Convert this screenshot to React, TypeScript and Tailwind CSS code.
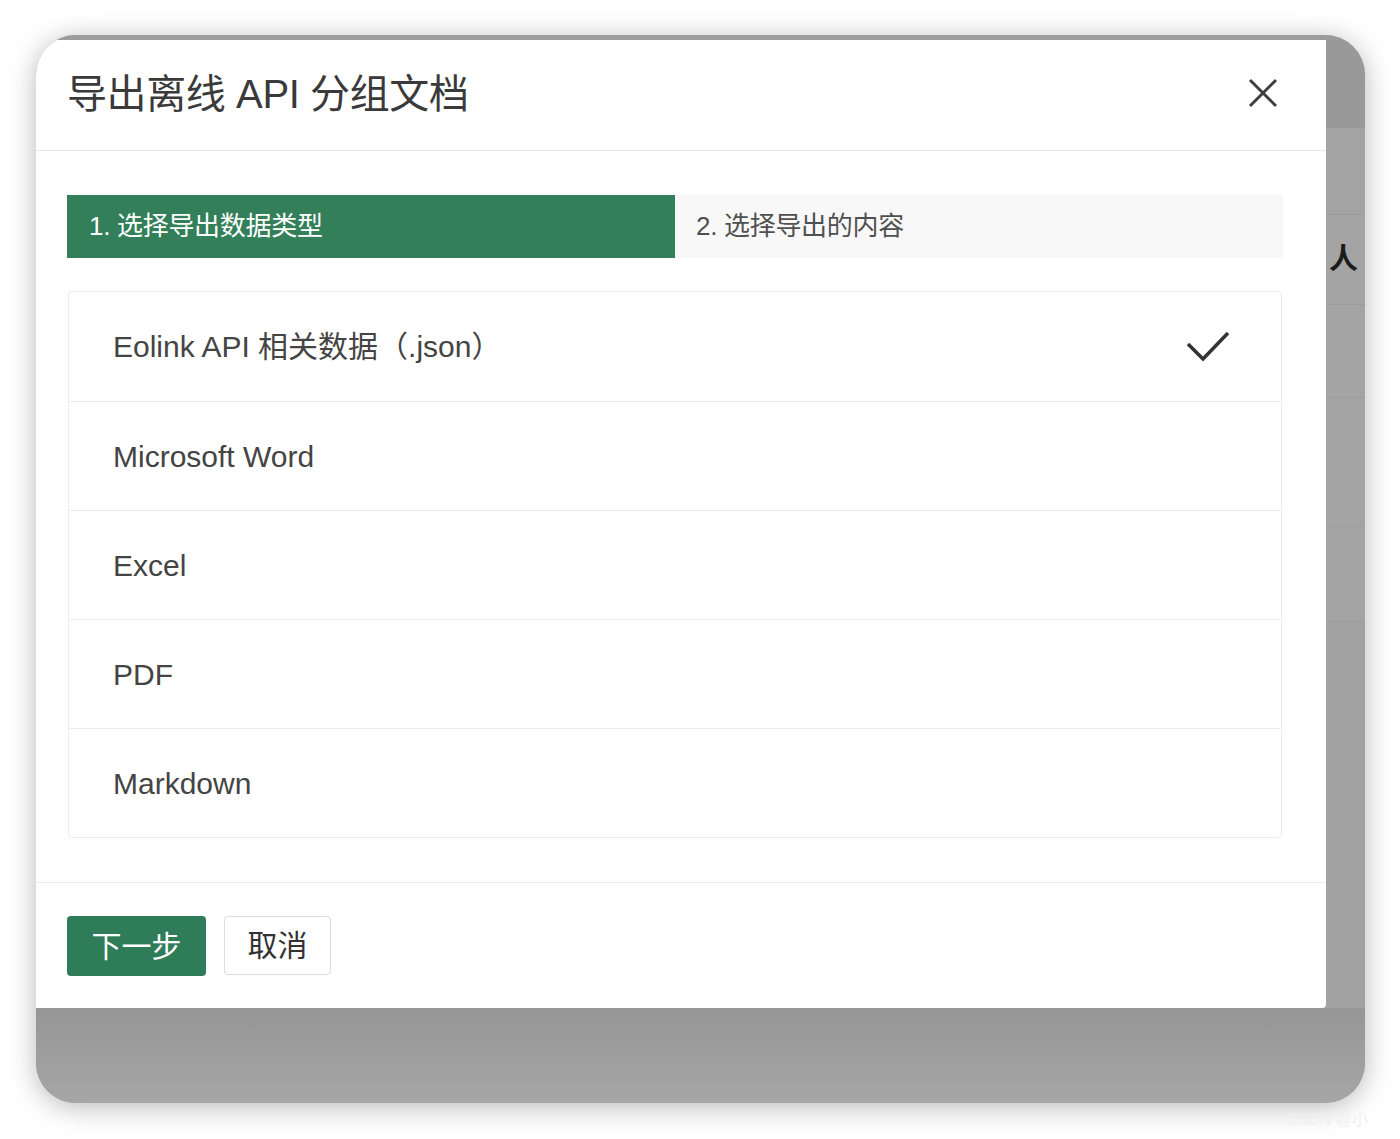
import React from "react";

const items = [
  "Eolink API 相关数据（.json）",
  "Microsoft Word",
  "Excel",
  "PDF",
  "Markdown",
];

export default function App() {
  return (
    <div className="w-[1400px] h-[1139px] bg-white pt-[35px] pl-[36px] font-['Liberation_Sans','Noto_Sans_CJK_SC',sans-serif]">
      <div className="w-[1329px] h-[1068px] rounded-[40px] overflow-hidden bg-[#a0a0a0] shadow-[0_4px_28px_rgba(0,0,0,0.28)] flex flex-col">
        <div className="h-[5px] bg-[#9c9c9c]" />
        <div className="flex">
          {/* Modal */}
          <div className="w-[1290px] h-[968px] bg-white rounded-br-[4px] flex flex-col">
            <div className="h-[111px] border-b border-[#e8e8e8] flex items-center justify-between pl-[31px] pr-[48px]">
              <div className="text-[40px] text-[#3a3a3a] tracking-[-0.4px] pb-[2px]">导出离线 API 分组文档</div>
              <svg width="30" height="30" viewBox="0 0 30 30" className="mb-[4px]">
                <path d="M2 2 L28 28 M28 2 L2 28" stroke="#3f3f3f" strokeWidth="3" fill="none" />
              </svg>
            </div>
            <div className="pt-[44px] pl-[31px] pr-[43px]">
              <div className="flex h-[63px]">
                <div className="w-[608px] bg-[#337f5a] flex items-center pl-[22px] text-[26px] text-white tracking-[-0.3px]">
                  1. 选择导出数据类型
                </div>
                <div className="flex-1 bg-[#f8f8f8] flex items-center pl-[21px] text-[26px] text-[#505050] tracking-[-0.3px]">
                  2. 选择导出的内容
                </div>
              </div>
              <div className="mt-[33px] ml-[1px] w-[1214px] border border-[#ececec] rounded-[4px] flex flex-col">
                {items.map((t, i) => (
                  <div
                    key={t}
                    className={
                      "h-[109px] flex items-center justify-between pl-[44px] pr-[50px] text-[30px] text-[#444] " +
                      (i > 0 ? "border-t border-[#ececec]" : "")
                    }
                  >
                    <span>{t}</span>
                    {i === 0 && (
                      <svg width="46" height="34" viewBox="0 0 46 34">
                        <path d="M3 14 L18 29 L43 3" stroke="#333" strokeWidth="3.5" fill="none" strokeLinejoin="miter" />
                      </svg>
                    )}
                  </div>
                ))}
              </div>
            </div>
            <div className="mt-[44px] border-t border-[#ececec] flex-1 pt-[33px] pl-[31px] flex gap-[18px] items-start">
              <div className="w-[139px] h-[60px] rounded-[4px] bg-[#2f7d58] text-white text-[30px] flex items-center justify-center">
                下一步
              </div>
              <div className="w-[107px] h-[59px] rounded-[4px] border border-[#dcdcdc] bg-white text-[#333] text-[30px] flex items-center justify-center">
                取消
              </div>
            </div>
          </div>
          {/* background strip */}
          <div className="flex-1 flex flex-col overflow-hidden">
            <div className="h-[88px] bg-[#999]" />
            <div className="h-[87px] bg-[#a3a3a3] border-b border-[#9a9a9a]" />
            <div className="h-[90px] bg-[#a4a4a4] border-b border-[#9c9c9c] flex items-center justify-end pr-[7px]">
              <span className="text-[29px] leading-none font-bold text-[#1c1c1c]">人</span>
            </div>
            <div className="h-[93px] bg-[#a4a4a4] border-b border-[#9c9c9c]" />
            <div className="h-[129px] bg-[#a4a4a4] border-b border-[#9c9c9c]" />
            <div className="h-[95px] bg-[#a4a4a4] border-b border-[#9c9c9c]" />
            <div className="flex-1 bg-[#a2a2a2]" />
          </div>
        </div>
        <div className="flex-1 bg-gradient-to-b from-[#969696] to-[#a6a6a6]" />
      </div>
      <div className="absolute left-[1286px] top-[1108px] text-[16px] text-[#f0f0f0]">CSDN @小</div>
    </div>
  );
}
